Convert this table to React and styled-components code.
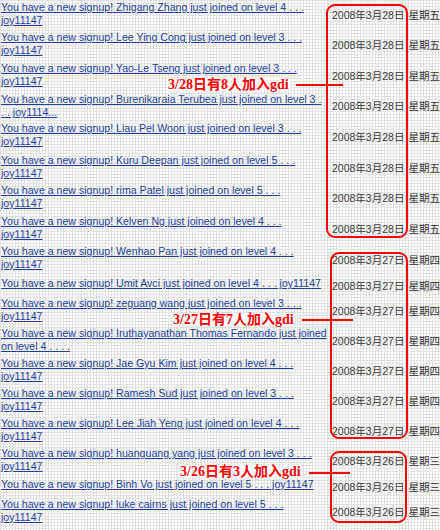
import React from "react";
import styled, { createGlobalStyle } from "styled-components";

const GlobalStyle = createGlobalStyle`
    html, body {
        margin: 0;
        padding: 0;
        background: #fff;
    }
`;

const Page = styled.div`
    position: relative;
    width: 440px;
    height: 530px;
    overflow: hidden;
    background-color: #fff;
    background-image: linear-gradient(#e2e2e2 1px, transparent 1px),
        linear-gradient(90deg, #e2e2e2 1px, transparent 1px);
    background-size: 3px 3px;
`;

const List = styled.div`
    display: flex;
    flex-direction: column;
`;

const Row = styled.div`
    display: flex;
    height: ${(props) => props.$h}px;
`;

const LinkCell = styled.div`
    width: 330px;
    padding: 1px 0 0 1px;
    box-sizing: border-box;
`;

const Signup = styled.a`
    display: block;
    font-family: "Liberation Sans", Arial, sans-serif;
    font-size: 10.6px;
    line-height: 13px;
    color: #1d3f9e;
    text-decoration: underline;
    white-space: nowrap;
    cursor: pointer;
`;

const DateCell = styled.div`
    display: flex;
    align-items: center;
    gap: 4px;
    padding: 0 0 2px 2px;
    font-family: "Liberation Sans", "Noto Sans CJK SC", sans-serif;
    font-size: 10.5px;
    color: #3a3a3a;
    white-space: nowrap;
`;

const Weekday = styled.span`
    color: #333;
`;

const Frame = styled.div`
    position: absolute;
    left: ${(props) => props.$x}px;
    top: ${(props) => props.$y}px;
    width: ${(props) => props.$w}px;
    height: ${(props) => props.$h}px;
    border: 2px solid #f00;
    border-radius: 9px;
    box-sizing: border-box;
    pointer-events: none;
`;

const Note = styled.div`
    position: absolute;
    left: ${(props) => props.$x}px;
    top: ${(props) => props.$y}px;
    padding: 0 1px;
    background: #fff;
    color: #f00;
    font-family: "Liberation Serif", "Noto Sans CJK SC", serif;
    font-weight: bold;
    font-size: 14px;
    line-height: 13px;
    white-space: nowrap;
`;

const Pointer = styled.div`
    position: absolute;
    left: ${(props) => props.$x}px;
    top: ${(props) => props.$y}px;
    width: ${(props) => props.$w}px;
    height: 2px;
    background: #f00;
`;

const pre = "You have a new signup! ";

const groups = [
    {
        date: "2008年3月28日",
        day: "星期五",
        items: [
            { a: "Zhigang Zhang just joined on level 4 . . .", b: "joy11147", h: 30 },
            { a: "Lee Ying Cong just joined on level 3 . . .", b: "joy11147", h: 31 },
            { a: "Yao-Le Tseng just joined on level 3 . . .", b: "joy11147", h: 31 },
            { a: "Burenikaraia Terubea just joined on level 3 .", b: ". . joy1114...", h: 29 },
            { a: "Liau Pel Woon just joined on level 3 . . .", b: "joy11147", h: 32 },
            { a: "Kuru Deepan just joined on level 5 . . .", b: "joy11147", h: 30 },
            { a: "rima Patel just joined on level 5 . . .", b: "joy11147", h: 31 },
            { a: "Kelven Ng just joined on level 4 . . .", b: "joy11147", h: 30 },
        ],
    },
    {
        date: "2008年3月27日",
        day: "星期四",
        items: [
            { a: "Wenhao Pan just joined on level 4 . . .", b: "joy11147", h: 32 },
            { a: "Umit Avci just joined on level 4 . . . joy11147", h: 20 },
            { a: "zeguang wang just joined on level 3 . . .", b: "joy11147", h: 30 },
            { a: "Iruthayanathan Thomas Fernando just joined", b: "on level 4 . . . .", h: 30 },
            { a: "Jae Gyu Kim just joined on level 4 . . .", b: "joy11147", h: 30 },
            { a: "Ramesh Sud just joined on level 3 . . .", b: "joy11147", h: 30 },
            { a: "Lee Jiah Yeng just joined on level 4 . . .", b: "joy11147", h: 30 },
        ],
    },
    {
        date: "2008年3月26日",
        day: "星期三",
        items: [
            { a: "huanguang yang just joined on level 3 . . .", b: "joy11147", h: 31 },
            { a: "Binh Vo just joined on level 5 . . . joy11147", h: 20 },
            { a: "luke cairns just joined on level 5 . . .", b: "joy11147", h: 30 },
        ],
    },
];

const frames = [
    { x: 326, y: 4, w: 82, h: 234 },
    { x: 330, y: 252, w: 78, h: 187 },
    { x: 330, y: 451, w: 77, h: 72 },
];

const notes = [
    { text: "3/28日有8人加入gdi", x: 167, y: 78, lx: 296, ly: 84, lw: 47 },
    { text: "3/27日有7人加入gdi", x: 172, y: 313, lx: 302, ly: 319, lw: 51 },
    { text: "3/26日有3人加入gdi", x: 179, y: 465, lx: 309, ly: 472, lw: 41 },
];

const App = () => {
    return (
        <Page>
            <GlobalStyle />
            <List>
                {groups.map((g) =>
                    g.items.map((item) => (
                        <Row key={item.a} $h={item.h}>
                            <LinkCell>
                                <Signup>
                                    {pre + item.a}
                                    {item.b && <br />}
                                    {item.b}
                                </Signup>
                            </LinkCell>
                            <DateCell>
                                <span>{g.date}</span>
                                <Weekday>{g.day}</Weekday>
                            </DateCell>
                        </Row>
                    ))
                )}
            </List>
            {frames.map((f, i) => (
                <Frame key={i} $x={f.x} $y={f.y} $w={f.w} $h={f.h} />
            ))}
            {notes.map((n) => (
                <React.Fragment key={n.text}>
                    <Note $x={n.x} $y={n.y}>
                        {n.text}
                    </Note>
                    <Pointer $x={n.lx} $y={n.ly} $w={n.lw} />
                </React.Fragment>
            ))}
        </Page>
    );
};

export default App;
